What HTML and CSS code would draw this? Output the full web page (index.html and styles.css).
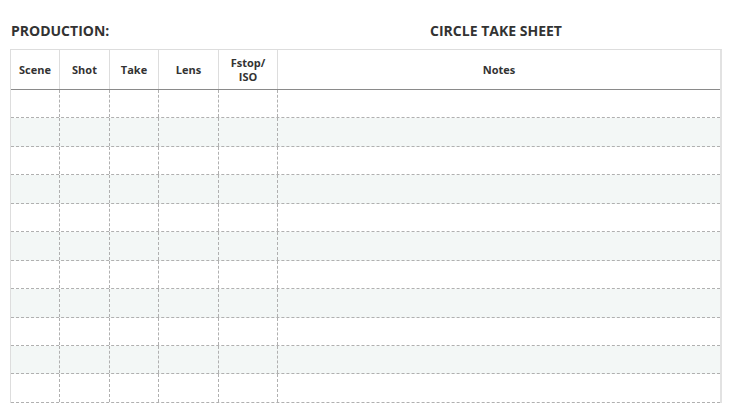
FILE: index.html
```html
<!DOCTYPE html>
<html>
<head>
<meta charset="utf-8">
<link rel="stylesheet" href="styles.css">
</head>
<body>
<div class="page">
  <div class="titlebar">
    <div class="production">PRODUCTION:</div>
    <div class="title">CIRCLE TAKE SHEET</div>
  </div>
  <div class="sheet">
    <div class="row head">
      <div class="cell">Scene</div>
      <div class="cell">Shot</div>
      <div class="cell">Take</div>
      <div class="cell">Lens</div>
      <div class="cell">Fstop/<br>ISO</div>
      <div class="cell">Notes</div>
    </div>
    <div class="row body"><div class="cell"></div><div class="cell"></div><div class="cell"></div><div class="cell"></div><div class="cell"></div><div class="cell"></div></div>
    <div class="row body alt"><div class="cell"></div><div class="cell"></div><div class="cell"></div><div class="cell"></div><div class="cell"></div><div class="cell"></div></div>
    <div class="row body"><div class="cell"></div><div class="cell"></div><div class="cell"></div><div class="cell"></div><div class="cell"></div><div class="cell"></div></div>
    <div class="row body alt"><div class="cell"></div><div class="cell"></div><div class="cell"></div><div class="cell"></div><div class="cell"></div><div class="cell"></div></div>
    <div class="row body"><div class="cell"></div><div class="cell"></div><div class="cell"></div><div class="cell"></div><div class="cell"></div><div class="cell"></div></div>
    <div class="row body alt"><div class="cell"></div><div class="cell"></div><div class="cell"></div><div class="cell"></div><div class="cell"></div><div class="cell"></div></div>
    <div class="row body"><div class="cell"></div><div class="cell"></div><div class="cell"></div><div class="cell"></div><div class="cell"></div><div class="cell"></div></div>
    <div class="row body alt"><div class="cell"></div><div class="cell"></div><div class="cell"></div><div class="cell"></div><div class="cell"></div><div class="cell"></div></div>
    <div class="row body"><div class="cell"></div><div class="cell"></div><div class="cell"></div><div class="cell"></div><div class="cell"></div><div class="cell"></div></div>
    <div class="row body alt"><div class="cell"></div><div class="cell"></div><div class="cell"></div><div class="cell"></div><div class="cell"></div><div class="cell"></div></div>
    <div class="row body"><div class="cell"></div><div class="cell"></div><div class="cell"></div><div class="cell"></div><div class="cell"></div><div class="cell"></div></div>
  </div>
</div>
</body>
</html>
```
FILE: styles.css
```css
html, body {
  margin: 0;
  padding: 0;
  background: #ffffff;
}
body {
  font-family: "Open Sans", "Liberation Sans", sans-serif;
  color: #333333;
}
.page {
  padding: 21px 0 0 10px;
  width: 712px;
}
.titlebar {
  display: grid;
  grid-template-columns: 267px 1fr;
  height: 28px;
  align-items: start;
}
.production, .title {
  font-size: 14px;
  font-weight: 700;
  line-height: 20px;
}
.production {
  padding-left: 1px;
}
.title {
  text-align: center;
  padding-right: 7px;
}
.sheet {
  border-top: 1px solid #dddddd;
  border-left: 1px solid #dddddd;
  border-right: 2px solid #e2e2e2;
}
.row {
  display: grid;
  grid-template-columns: 49px 50px 49px 60px 59px 1fr;
}
.head {
  height: 39px;
  border-bottom: 1px solid #8a8a8a;
}
.head .cell {
  display: flex;
  align-items: center;
  justify-content: center;
  text-align: center;
  font-size: 11px;
  font-weight: 700;
  line-height: 14px;
  border-right: 1px solid #dddddd;
}
.head .cell:last-child {
  border-right: 0;
}
.body {
  height: 28.45px;
  box-sizing: border-box;
  border-bottom: 1px dashed #b0b0b0;
}
.body .cell {
  border-right: 1px dashed #b0b0b0;
}
.body .cell:last-child {
  border-right: 0;
}
.alt {
  background: #f3f7f6;
}
```
